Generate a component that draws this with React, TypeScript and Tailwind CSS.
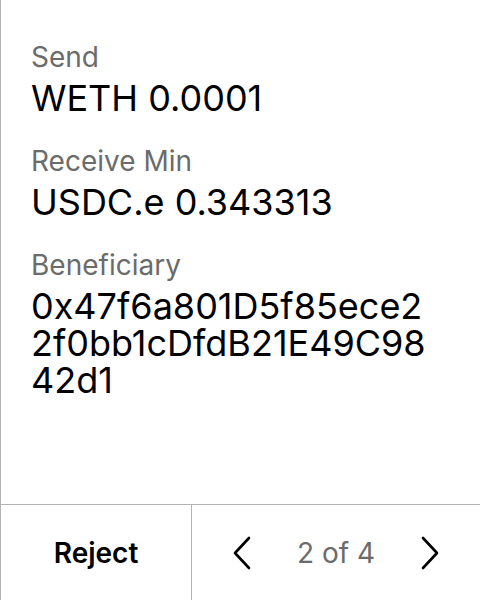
const rows = [
  { label: "Send", value: "WETH 0.0001" },
  { label: "Receive Min", value: "USDC.e 0.343313" },
  { label: "Beneficiary", value: "0x47f6a801D5f85ece22f0bb1cDfdB21E49C9842d1" },
];

function Chevron({ dir }: { dir: "left" | "right" }) {
  return (
    <svg width="20" height="34" viewBox="0 0 20 34" fill="none" stroke="currentColor" strokeWidth="2.6" strokeLinecap="round" strokeLinejoin="round">
      {dir === "left" ? <polyline points="17,2 3,17 17,32" /> : <polyline points="3,2 17,17 3,32" />}
    </svg>
  );
}

export default function App() {
  return (
    <div
      className="flex h-[600px] w-[480px] flex-col border-l border-[#b3b3b3] bg-white text-black"
      style={{ fontFamily: "Inter, 'Noto Sans', sans-serif" }}
    >
      <div className="flex-1 pl-[30px] pr-[40px] pt-[41px]">
        {rows.map((r) => (
          <div key={r.label} className="mb-[28px]">
            <div className="text-[28px] leading-[32px] text-[#6b6b6b]">{r.label}</div>
            <div className="mt-[7px] break-all text-[36px] leading-[37px]">{r.value}</div>
          </div>
        ))}
      </div>
      <div className="flex h-[96px] border-t border-[#b3b3b3]">
        <button className="flex w-[191px] items-center justify-center border-r border-[#b3b3b3] text-[28px] font-semibold">
          Reject
        </button>
        <div className="flex flex-1 items-center justify-between px-[40px]">
          <Chevron dir="left" />
          <span className="text-[28px] text-[#6b6b6b]">2 of 4</span>
          <Chevron dir="right" />
        </div>
      </div>
    </div>
  );
}
